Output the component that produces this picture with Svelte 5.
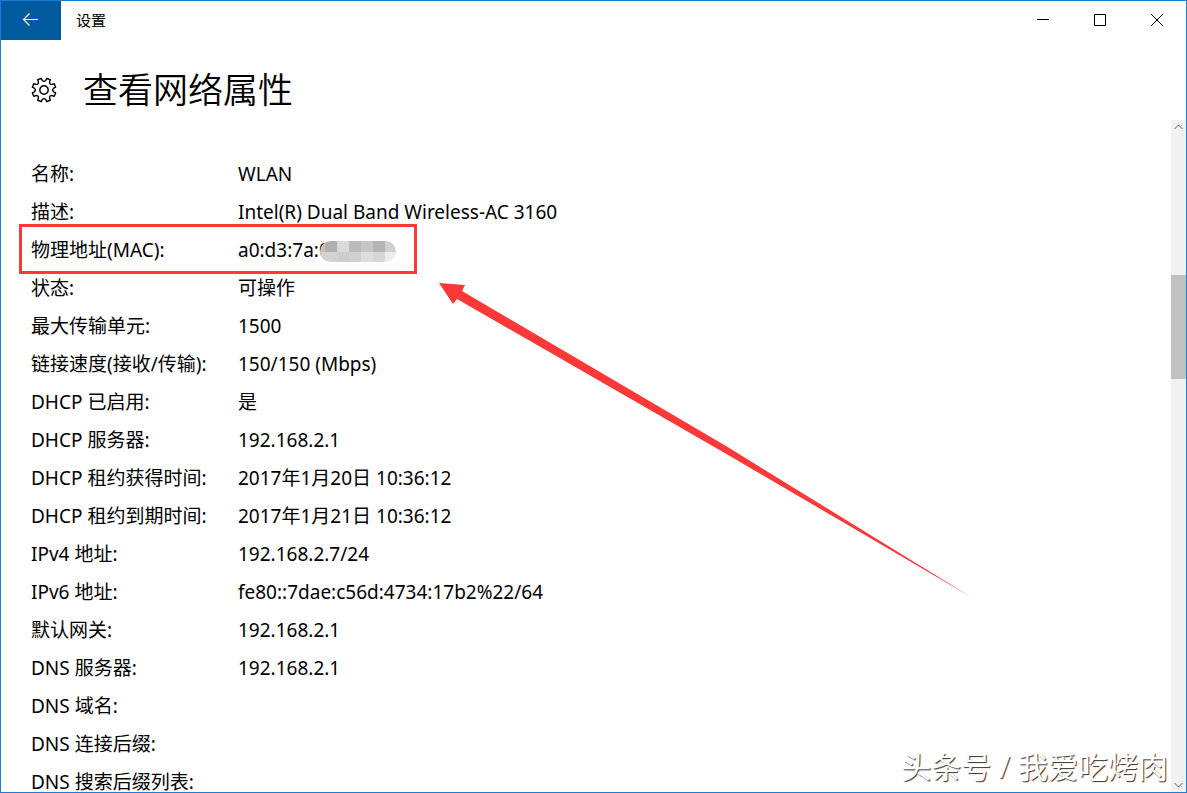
<script lang="ts">
  interface Row {
    label: string;
    value: string;
    masked?: boolean;
  }

  const rows: Row[] = [
    { label: '名称:', value: 'WLAN' },
    { label: '描述:', value: 'Intel(R) Dual Band Wireless-AC 3160' },
    { label: '物理地址(MAC):', value: 'a0:d3:7a:0', masked: true },
    { label: '状态:', value: '可操作' },
    { label: '最大传输单元:', value: '1500' },
    { label: '链接速度(接收/传输):', value: '150/150 (Mbps)' },
    { label: 'DHCP 已启用:', value: '是' },
    { label: 'DHCP 服务器:', value: '192.168.2.1' },
    { label: 'DHCP 租约获得时间:', value: '2017年1月20日 10:36:12' },
    { label: 'DHCP 租约到期时间:', value: '2017年1月21日 10:36:12' },
    { label: 'IPv4 地址:', value: '192.168.2.7/24' },
    { label: 'IPv6 地址:', value: 'fe80::7dae:c56d:4734:17b2%22/64' },
    { label: '默认网关:', value: '192.168.2.1' },
    { label: 'DNS 服务器:', value: '192.168.2.1' },
    { label: 'DNS 域名:', value: '' },
    { label: 'DNS 连接后缀:', value: '' },
    { label: 'DNS 搜索后缀列表:', value: '' },
  ];

  // mosaic tiles, 12px wide, top row then bottom row
  const tiles = [
    ['#c4c4c4', '#b0b0b0', '#dadada', '#bababa', '#c6c6c6', '#b6b6b6', '#d0d0d0'],
    ['#d0d0d0', '#d2d2d2', '#cdcdcd', '#d0d0d0', '#dedede', '#d6d6d6', '#ececec'],
  ];

  // eight-toothed gear outline around 0,0
  function gear(): string {
    const at = (deg: number, r: number) => {
      const a = (deg * Math.PI) / 180;
      return `${(r * Math.cos(a)).toFixed(2)} ${(r * Math.sin(a)).toFixed(2)}`;
    };
    let d = '';
    for (let k = 0; k < 8; k++) {
      const a = 22.5 + k * 45;
      d += `${k ? 'L' : 'M'}${at(a - 9, 12)} L${at(a + 9, 12)} L${at(a + 12, 9.8)} `;
      d += `Q${at(a + 22.5, 7.6)} ${at(a + 33, 9.8)} `;
    }
    return d + 'Z';
  }
</script>

<div class="window">
  <header class="titlebar">
    <button type="button" class="back" aria-label="返回">
      <svg width="16" height="14" viewBox="0 0 16 14">
        <path d="M15 5.5H.5M6.5 -.5 .5 5.5 6.5 11.5" />
      </svg>
    </button>
    <span class="app-name">设置</span>
    <div class="controls">
      <button type="button" aria-label="最小化">
        <svg width="12" height="12" viewBox="0 0 12 12"><path d="M0 5.5H12" /></svg>
      </button>
      <button type="button" aria-label="最大化">
        <svg width="12" height="12" viewBox="0 0 12 12"><path d="M.5 .5H11.5V11.5H.5Z" /></svg>
      </button>
      <button type="button" aria-label="关闭">
        <svg width="12" height="12" viewBox="0 0 12 12"><path d="M0 0 12 12M12 0 0 12" /></svg>
      </button>
    </div>
  </header>

  <div class="heading">
    <svg class="gear" width="26" height="26" viewBox="-13 -13 26 26">
      <path d={gear()} />
      <circle r="4.2" />
    </svg>
    <h1>查看网络属性</h1>
  </div>

  <div class="body">
    <main>
      <table>
        <tbody>
          {#each rows as row}
            <tr>
              <th scope="row">{row.label}</th>
              <td>
                {row.value}{#if row.masked}<span class="mosaic">
                    {#each tiles as line}
                      <span class="line">
                        {#each line as color}<i style:background={color}></i>{/each}
                      </span>
                    {/each}
                  </span>{/if}
              </td>
            </tr>
          {/each}
        </tbody>
      </table>
      <div class="frame"></div>
      <svg class="arrow" width="532" height="316" viewBox="0 0 532 316">
        <path d="M0 0 26 2 23 8 287 163 532 314 284 169 18 16 14 21Z" />
      </svg>
    </main>

    <div class="scrollbar">
      <button type="button" aria-label="向上滚动">
        <svg width="9" height="6" viewBox="0 0 9 6"><path d="M.5 5 4.5 1 8.5 5" /></svg>
      </button>
      <div class="track"><div class="thumb"></div></div>
      <button type="button" aria-label="向下滚动">
        <svg width="9" height="6" viewBox="0 0 9 6"><path d="M.5 1 4.5 5 8.5 1" /></svg>
      </button>
    </div>
  </div>

  <p class="watermark">头条号 / 我爱吃烤肉</p>
</div>

<style>
  :global(body) {
    background: #fff;
  }

  .window {
    position: relative;
    display: flex;
    flex-direction: column;
    box-sizing: border-box;
    height: 100vh;
    border: 1px solid #1a7fd4;
    overflow: hidden;
    background: #fff;
    color: #000;
    font-family: 'Noto Sans', 'Noto Sans CJK SC', sans-serif;
    font-size: 19px;
  }

  svg {
    display: block;
    overflow: visible;
    fill: none;
    stroke: currentColor;
  }

  button {
    display: flex;
    align-items: center;
    justify-content: center;
    padding: 0;
    border: 0;
    background: transparent;
    color: inherit;
  }

  .titlebar {
    display: flex;
    flex: none;
    height: 39px;
  }

  .back {
    width: 60px;
    background: #005a9e;
    color: #fff;
  }

  .back svg {
    stroke-width: 1.2;
  }

  .app-name {
    margin-left: 15px;
    font-size: 15px;
    line-height: 38px;
  }

  .controls {
    display: flex;
    height: 38px;
    margin-right: 1px;
    margin-left: auto;
  }

  .controls button {
    width: 57px;
  }

  .heading {
    display: flex;
    flex: none;
    align-items: center;
    gap: 26px;
    height: 80px;
    box-sizing: border-box;
    padding: 20px 30px 0;
  }

  .gear {
    stroke-width: 1.4;
    stroke-linejoin: round;
  }

  h1 {
    margin: 0;
    font-size: 35px;
    font-weight: 350;
    line-height: 60px;
  }

  .body {
    display: flex;
    flex: 1;
    min-height: 0;
  }

  main {
    position: relative;
    flex: 1;
    overflow: hidden;
    padding: 35px 30px 0;
  }

  table {
    border-collapse: collapse;
  }

  th,
  td {
    height: 38px;
    padding: 0;
    font-weight: 400;
    line-height: 38px;
    text-align: left;
    white-space: nowrap;
  }

  th {
    width: 207px;
  }

  .mosaic {
    display: inline-block;
    width: 76px;
    height: 21px;
    margin-left: -10px;
    border-radius: 11px;
    overflow: hidden;
    vertical-align: middle;
  }

  .line {
    display: flex;
    height: 11px;
  }

  .line i {
    flex: none;
    width: 12px;
  }

  .line i:first-child {
    width: 5px;
  }

  .frame {
    position: absolute;
    top: 104px;
    left: 18px;
    box-sizing: border-box;
    width: 398px;
    height: 50px;
    border: 3px solid #fc3838;
  }

  .arrow {
    position: absolute;
    top: 163px;
    left: 438px;
    fill: #fc3838;
    stroke: none;
  }

  .scrollbar {
    display: flex;
    flex: none;
    flex-direction: column;
    width: 15px;
    background: #f1f1f1;
    color: #606060;
  }

  .scrollbar button {
    height: 14px;
  }

  .track {
    display: flex;
    flex: 1;
    flex-direction: column;
    padding-top: 141px;
  }

  .thumb {
    height: 104px;
    background: #c1c1c1;
  }

  .watermark {
    position: absolute;
    right: 18px;
    bottom: 4px;
    margin: 0;
    color: #fff;
    font-size: 30px;
    line-height: 42px;
    text-shadow: 1px 1px 1px #333;
  }
</style>
